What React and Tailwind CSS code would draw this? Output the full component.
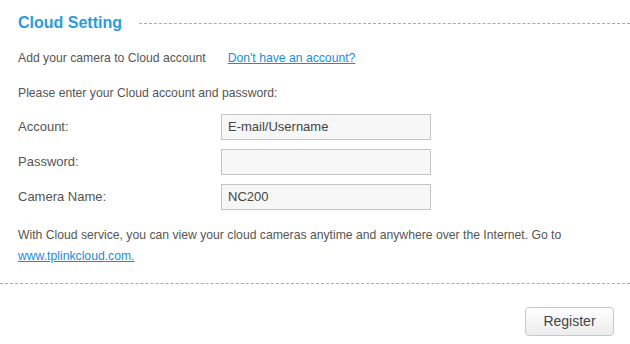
export default function App() {
  const rows = [
    { label: "Account:", value: "E-mail/Username" },
    { label: "Password:", value: "" },
    { label: "Camera Name:", value: "NC200" },
  ];

  return (
    <div className="w-[630px] h-[344px] bg-white overflow-hidden font-['Liberation_Sans',Arial,sans-serif] text-[12.2px] text-[#555]">
      <div className="flex items-center pl-[18px] pt-[13px]">
        <h2 className="text-[16px] font-bold text-[#2b9be0] leading-[20px]">Cloud Setting</h2>
        <div className="flex-1 ml-[17px] border-t border-dashed border-[#aaa]" />
      </div>

      <div className="pl-[18px] pr-[10px]">
        <div className="flex items-center mt-[17px] h-[16px]">
          <span>Add your camera to Cloud account</span>
          <a href="#" className="ml-[22px] text-[#1a8ce0] underline">
            Don't have an account?
          </a>
        </div>

        <p className="mt-[19px] leading-[16px]">Please enter your Cloud account and password:</p>

        <div className="mt-[13px] flex flex-col gap-[9px]">
          {rows.map((row) => (
            <div key={row.label} className="flex items-center">
              <label className="w-[203px] text-[13px]">{row.label}</label>
              <div className="w-[210px] h-[26px] border border-[#c4c4c4] bg-[#f7f7f7] flex items-center px-[6px] text-[13px] text-[#444]">
                {row.value}
              </div>
            </div>
          ))}
        </div>

        <p className="mt-[15px] leading-[21px]">
          With Cloud service, you can view your cloud cameras anytime and anywhere over the Internet. Go to{" "}
          <br />
          <a href="#" className="text-[#1a8ce0] underline">www.tplinkcloud.com.</a>
        </p>
      </div>

      <div className="mt-[16px] border-t border-dashed border-[#aaa]" />

      <div className="flex justify-end pr-[16px] mt-[23px]">
        <button className="w-[89px] h-[29px] rounded-[4px] border border-[#c8c8c8] bg-gradient-to-b from-white to-[#ececec] text-[14px] text-[#444]">
          Register
        </button>
      </div>
    </div>
  );
}
